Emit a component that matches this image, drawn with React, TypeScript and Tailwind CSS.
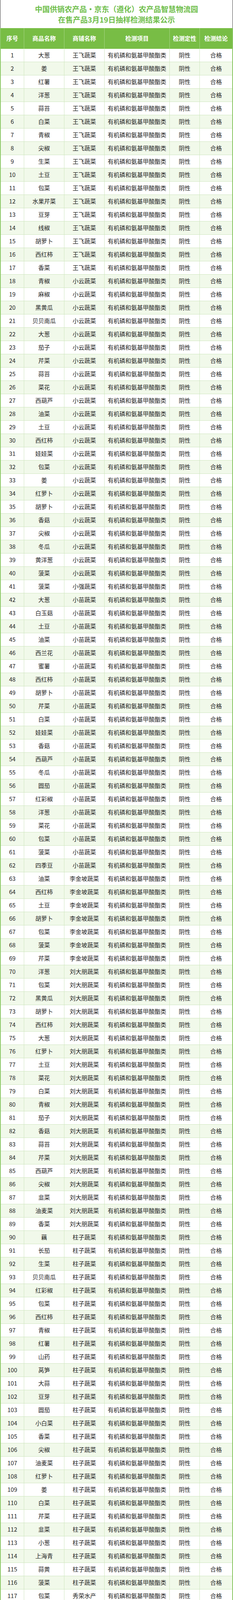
const rows: [string, string][] = [
  ['大葱', '王飞蔬菜'],
  ['姜', '王飞蔬菜'],
  ['红薯', '王飞蔬菜'],
  ['洋葱', '王飞蔬菜'],
  ['蒜苔', '王飞蔬菜'],
  ['白菜', '王飞蔬菜'],
  ['青椒', '王飞蔬菜'],
  ['尖椒', '王飞蔬菜'],
  ['生菜', '王飞蔬菜'],
  ['土豆', '王飞蔬菜'],
  ['包菜', '王飞蔬菜'],
  ['水果芹菜', '王飞蔬菜'],
  ['豆芽', '王飞蔬菜'],
  ['线椒', '王飞蔬菜'],
  ['胡萝卜', '王飞蔬菜'],
  ['西红柿', '王飞蔬菜'],
  ['香菜', '王飞蔬菜'],
  ['青椒', '小云蔬菜'],
  ['麻椒', '小云蔬菜'],
  ['黑黄瓜', '小云蔬菜'],
  ['贝贝南瓜', '小云蔬菜'],
  ['大葱', '小云蔬菜'],
  ['茄子', '小云蔬菜'],
  ['芹菜', '小云蔬菜'],
  ['蒜苔', '小云蔬菜'],
  ['菜花', '小云蔬菜'],
  ['西葫芦', '小云蔬菜'],
  ['油菜', '小云蔬菜'],
  ['土豆', '小云蔬菜'],
  ['西红柿', '小云蔬菜'],
  ['娃娃菜', '小云蔬菜'],
  ['包菜', '小云蔬菜'],
  ['姜', '小云蔬菜'],
  ['红萝卜', '小云蔬菜'],
  ['胡萝卜', '小云蔬菜'],
  ['香菇', '小云蔬菜'],
  ['尖椒', '小云蔬菜'],
  ['冬瓜', '小云蔬菜'],
  ['黄洋葱', '小云蔬菜'],
  ['菠菜', '小云蔬菜'],
  ['菠菜', '小强蔬菜'],
  ['大葱', '小苗蔬菜'],
  ['白玉菇', '小苗蔬菜'],
  ['土豆', '小苗蔬菜'],
  ['油菜', '小苗蔬菜'],
  ['西兰花', '小苗蔬菜'],
  ['蜜薯', '小苗蔬菜'],
  ['西红柿', '小苗蔬菜'],
  ['胡萝卜', '小苗蔬菜'],
  ['芹菜', '小苗蔬菜'],
  ['白菜', '小苗蔬菜'],
  ['娃娃菜', '小苗蔬菜'],
  ['香菇', '小苗蔬菜'],
  ['西葫芦', '小苗蔬菜'],
  ['冬瓜', '小苗蔬菜'],
  ['圆茄', '小苗蔬菜'],
  ['红彩椒', '小苗蔬菜'],
  ['洋葱', '小苗蔬菜'],
  ['菜花', '小苗蔬菜'],
  ['包菜', '小苗蔬菜'],
  ['菠菜', '小苗蔬菜'],
  ['四季豆', '小苗蔬菜'],
  ['油菜', '李金坡蔬菜'],
  ['西红柿', '李金坡蔬菜'],
  ['土豆', '李金坡蔬菜'],
  ['胡萝卜', '李金坡蔬菜'],
  ['包菜', '李金坡蔬菜'],
  ['菠菜', '李金坡蔬菜'],
  ['芹菜', '李金坡蔬菜'],
  ['洋葱', '刘大朋蔬菜'],
  ['包菜', '刘大朋蔬菜'],
  ['黑黄瓜', '刘大朋蔬菜'],
  ['胡萝卜', '刘大朋蔬菜'],
  ['西红柿', '刘大朋蔬菜'],
  ['大葱', '刘大朋蔬菜'],
  ['红萝卜', '刘大朋蔬菜'],
  ['土豆', '刘大朋蔬菜'],
  ['菜花', '刘大朋蔬菜'],
  ['白菜', '刘大朋蔬菜'],
  ['青椒', '刘大朋蔬菜'],
  ['茄子', '刘大朋蔬菜'],
  ['香菇', '刘大朋蔬菜'],
  ['蒜苔', '刘大朋蔬菜'],
  ['芹菜', '刘大朋蔬菜'],
  ['西葫芦', '刘大朋蔬菜'],
  ['尖椒', '刘大朋蔬菜'],
  ['韭菜', '刘大朋蔬菜'],
  ['油麦菜', '刘大朋蔬菜'],
  ['香菜', '刘大朋蔬菜'],
  ['藕', '柱子蔬菜'],
  ['长茄', '柱子蔬菜'],
  ['生菜', '柱子蔬菜'],
  ['贝贝南瓜', '柱子蔬菜'],
  ['红彩椒', '柱子蔬菜'],
  ['包菜', '柱子蔬菜'],
  ['西红柿', '柱子蔬菜'],
  ['青椒', '柱子蔬菜'],
  ['红薯', '柱子蔬菜'],
  ['山药', '柱子蔬菜'],
  ['莴笋', '柱子蔬菜'],
  ['大蒜', '柱子蔬菜'],
  ['豆芽', '柱子蔬菜'],
  ['圆茄', '柱子蔬菜'],
  ['小白菜', '柱子蔬菜'],
  ['香菜', '柱子蔬菜'],
  ['尖椒', '柱子蔬菜'],
  ['油麦菜', '柱子蔬菜'],
  ['红萝卜', '柱子蔬菜'],
  ['姜', '柱子蔬菜'],
  ['白菜', '柱子蔬菜'],
  ['芹菜', '柱子蔬菜'],
  ['韭菜', '柱子蔬菜'],
  ['小葱', '柱子蔬菜'],
  ['上海青', '柱子蔬菜'],
  ['蒜黄', '柱子蔬菜'],
  ['菠菜', '柱子蔬菜'],
  ['包菜', '秀荣水产'],
  ['白菜', '秀荣水产'],
]

const headers = ['序号', '商品名称', '商铺名称', '检测项目', '检测定性', '检测结论']

export default function App() {
  return (
    <div className="w-[597px] bg-white text-[#222] font-['Noto_Sans_CJK_SC','Noto_Sans',sans-serif]">
      {/* Title */}
      <div className="h-[72px] flex flex-col items-center justify-center border-x border-[#333] text-[19px] font-bold leading-[27px] text-[#6fbe4b]">
        <div>中国供销农产品·京东（遵化）农产品智慧物流园</div>
        <div>在售产品3月19日抽样检测结果公示</div>
      </div>

      {/* Table */}
      <div className="border-x-2 border-[#8cc866]">
        <div className="grid grid-cols-[60px_103px_103px_167px_77px_83px] h-[53px] bg-[#78bd45] text-white font-bold text-[15px]">
          {headers.map((h, i) => (
            <div
              key={h}
              className={`flex items-center justify-center ${i < 5 ? 'border-r border-[#a6d485]' : ''}`}
            >
              {h}
            </div>
          ))}
        </div>

        {rows.map(([name, shop], i) => (
          <div
            key={i}
            className={`grid grid-cols-[60px_103px_103px_167px_77px_83px] h-[34px] border-b border-[#cfe6bf] text-[15px] ${i % 2 === 1 ? 'bg-[#f1f9ea]' : 'bg-white'}`}
          >
            <div className="flex items-center justify-center border-r border-[#cfe6bf]">{i + 1}</div>
            <div className="flex items-center justify-center border-r border-[#cfe6bf]">{name}</div>
            <div className="flex items-center justify-center border-r border-[#cfe6bf]">{shop}</div>
            <div className="flex items-center justify-center border-r border-[#cfe6bf] whitespace-nowrap">有机磷和氨基甲酸酯类</div>
            <div className="flex items-center justify-center border-r border-[#cfe6bf]">阴性</div>
            <div className="flex items-center justify-center">合格</div>
          </div>
        ))}

        {/* Notes */}
        <div className="h-[168px] border-b-2 border-[#8cc866] pt-[37px] px-[2px] text-[14.4px] leading-[22.5px] text-[#222]">
          <p>1、结果判定：当酶抑制率≥50%时，表示蔬果中有机磷和氨基甲酸酯类农药残留高于检测限，为农残超标。酶抑制率&lt;50%为农残不超标。</p>
          <p>2、快检结果仅供遵化中合农产品市场有限公司内部使用。</p>
          <p>3、快检结果仅供参考，不具备法律效应。</p>
        </div>
      </div>
    </div>
  )
}
